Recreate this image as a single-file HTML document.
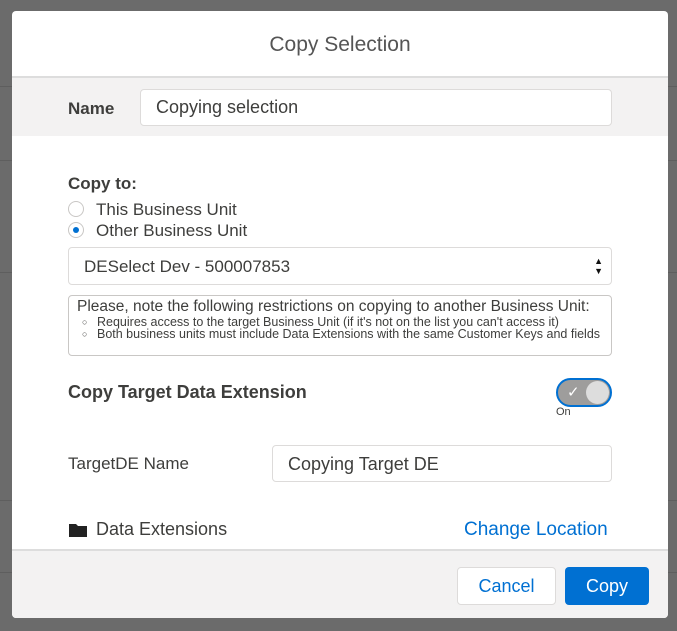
<!DOCTYPE html>
<html><head><style>
*{box-sizing:border-box;margin:0;padding:0}
body{width:677px;height:631px;background:#6b6b6b;font-family:"Liberation Sans",sans-serif;position:relative;overflow:hidden;color:#3e3e3c}
.bgl{position:absolute;left:0;width:12px;height:1px;background:#5e5e5e}
.bgr{position:absolute;right:0;width:9px;height:1px;background:#5e5e5e}
.modal{position:absolute;left:12px;top:11px;width:656px;height:607px;background:#fff;border-radius:4px;overflow:hidden}
.hdr{height:67px;text-align:center;font-size:21px;font-weight:300;color:#555;line-height:68px;border-bottom:2px solid #ddd}
.namebar{position:absolute;top:67px;left:0;right:0;height:58px;background:#f3f2f2}
.lbl{position:absolute;font-size:17px}
.inp{position:absolute;border:1px solid #dddbda;border-radius:4px;background:#fff;font-size:18px;padding-left:15px;color:#3e3e3c}
.radio{position:absolute;width:16px;height:16px;border:1px solid #c9c7c5;border-radius:50%;background:#fff}
.foot{position:absolute;left:0;right:0;top:538px;bottom:0;background:#f3f2f2;border-top:2px solid #ddd}
.btn{position:absolute;border-radius:4px;font-size:18px;text-align:center}
</style></head><body>
<div class="bgl" style="top:86px"></div><div class="bgl" style="top:160px"></div><div class="bgl" style="top:272px"></div><div class="bgl" style="top:500px"></div><div class="bgl" style="top:572px"></div>
<div class="bgr" style="top:86px"></div><div class="bgr" style="top:160px"></div><div class="bgr" style="top:272px"></div><div class="bgr" style="top:500px"></div><div class="bgr" style="top:572px"></div>
<div class="modal">
<div class="hdr">Copy Selection</div>
<div class="namebar">
 <div class="lbl" style="left:56px;top:21px;font-weight:bold;color:#3e3e3c">Name</div>
 <div class="inp" style="left:128px;top:11px;width:472px;height:37px;line-height:35px">Copying selection</div>
</div>
<div class="lbl" style="left:56px;top:163px;font-weight:bold">Copy to:</div>
<div class="radio" style="left:56px;top:190px"></div>
<div class="lbl" style="left:84px;top:189px">This Business Unit</div>
<div class="radio" style="left:56px;top:211px"><div style="position:absolute;left:4px;top:4px;width:6px;height:6px;border-radius:50%;background:#0070d2"></div></div>
<div class="lbl" style="left:84px;top:210px">Other Business Unit</div>
<div class="inp" style="left:56px;top:236px;width:544px;height:38px;line-height:38px;font-size:17px">DESelect Dev - 500007853
 <div style="position:absolute;right:8px;top:8px;font-size:9px;line-height:10px;color:#111">▲<br>▼</div></div>
<div style="position:absolute;left:56px;top:284px;width:544px;height:61px;border:1px solid #c9c7c5;border-radius:4px;padding:2px 8px;font-size:15.5px;line-height:18px">
 Please, note the following restrictions on copying to another Business Unit:
 <div style="font-size:12.5px;line-height:12px;padding-left:20px;position:relative">
 <div>Requires access to the target Business Unit (if it's not on the list you can't access it)</div>
 <div>Both business units must include Data Extensions with the same Customer Keys and fields</div>
 <span style="position:absolute;left:5px;top:0;font-size:9px">○<br>○</span></div>
</div>
<div class="lbl" style="left:56px;top:371px;font-weight:bold;font-size:18px">Copy Target Data Extension</div>
<div style="position:absolute;left:544px;top:367px;width:56px;height:29px;border:2px solid #0070d2;border-radius:15px;background:#9e9d9c">
 <div style="position:absolute;left:9px;top:3px;color:#fff;font-size:15px">✓</div>
 <div style="position:absolute;right:1px;top:1px;width:23px;height:23px;border-radius:50%;background:#ddd"></div>
</div>
<div style="position:absolute;left:544px;top:395px;font-size:11px">On</div>
<div class="lbl" style="left:56px;top:443px">TargetDE Name</div>
<div class="inp" style="left:260px;top:434px;width:340px;height:37px;line-height:36px">Copying Target DE</div>
<svg style="position:absolute;left:56px;top:511px" width="20" height="16" viewBox="0 0 20 16"><path d="M1 2h7l2 2h9v11H1z" fill="#222"/></svg>
<div class="lbl" style="left:84px;top:508px;font-size:18px">Data Extensions</div>
<div class="lbl" style="left:452px;top:508px;color:#0070d2;font-size:19px">Change Location</div>
<div class="foot">
 <div class="btn" style="left:445px;top:16px;width:99px;height:38px;line-height:36px;border:1px solid #dddbda;background:#fff;color:#0070d2">Cancel</div>
 <div class="btn" style="left:553px;top:16px;width:84px;height:38px;line-height:38px;background:#0070d2;color:#fff">Copy</div>
</div>
</div>
</body></html>
